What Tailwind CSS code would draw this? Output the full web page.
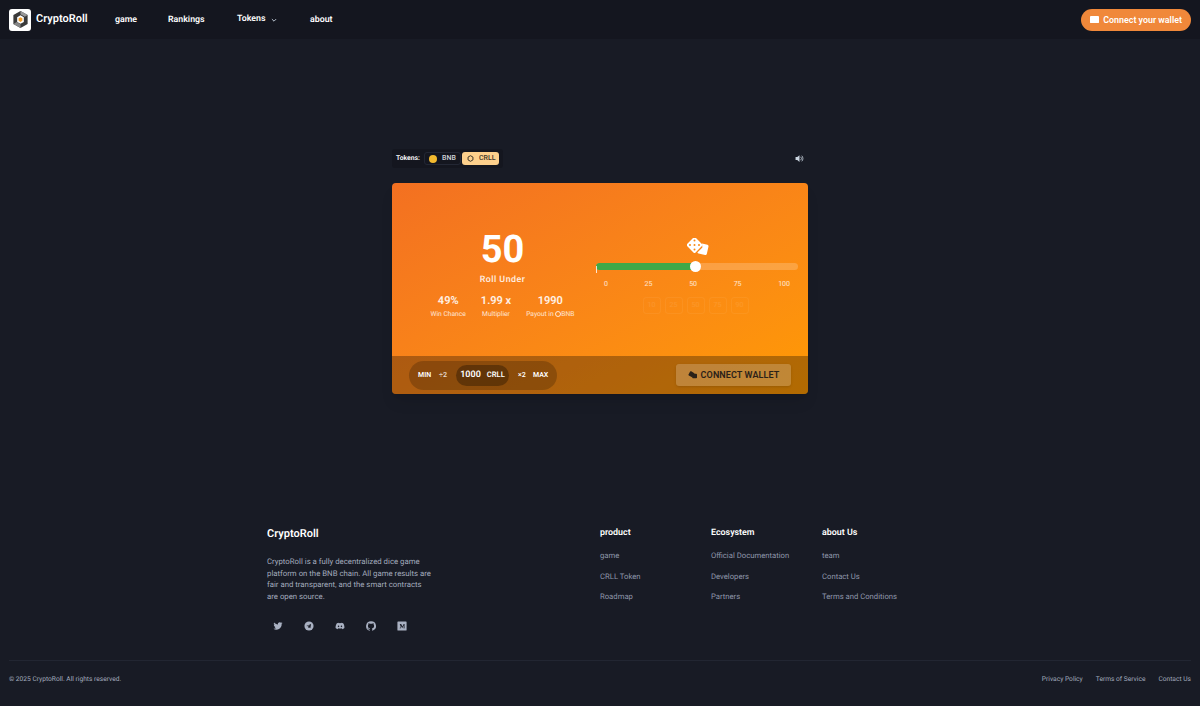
<!DOCTYPE html>
<html lang="en">
<head>
    <meta charset="UTF-8">
    <meta name="viewport" content="width=device-width, initial-scale=1.0">
    <title>CryptoRoll</title>
    <script src="https://cdn.jsdelivr.net/npm/@tailwindcss/browser@4"></script>
</head>
<body class="bg-[#181b25] text-white font-['Roboto',sans-serif] [text-rendering:geometricPrecision] h-[706px] overflow-hidden">
    <nav class="h-[39px] bg-[#14161f] flex items-center justify-between pl-[9px] pr-[9px]">
        <div class="flex items-center">
            <div class="flex items-center gap-[5px] w-[106px]">
                <div class="w-[22px] h-[22px] bg-white rounded-[3px] flex items-center justify-center">
                    <svg viewBox="0 0 20 20" class="w-[19px] h-[19px]">
                        <path d="M10 1l7.500 4.300v9.400L10 19l-7.500-4.300V5.300z" fill="#3a3a3a"/>
                        <path d="M10 1l7.500 4.300-3 1.700L10 4.500z" fill="#999"/>
                        <path d="M2.500 14.700L6 12.500l4 2.500v4z" fill="#888"/>
                        <path d="M10 5.500l3.500 2v5L10 14.500l-3.500-2v-5z" fill="#fff"/>
                        <path d="M10 7.500l2 1.200v2.600l-2 1.200-2-1.200V8.700z" fill="#f5a02c"/>
                    </svg>
                </div>
                <span class="text-[11px] font-semibold">CryptoRoll</span>
            </div>
            <div class="flex items-center text-[8.800px] font-semibold mt-[2px]">
                <a class="w-[53px]">game</a>
                <a class="w-[69px]">Rankings</a>
                <a class="w-[73px] flex items-center gap-[6px] -mt-[1px]">Tokens
                    <svg viewBox="0 0 10 10" class="w-[6px] h-[6px]" fill="none" stroke="#cbd5e1" stroke-width="1.500"><path d="M1.500 3.500L5 7l3.500-3.500"/></svg>
                </a>
                <a>about</a>
            </div>
        </div>
        <button class="h-[22px] w-[110px] rounded-full bg-[#f0883a] flex items-center justify-end pr-[9px] gap-[4px] text-[8.900px] font-semibold">
            <svg viewBox="0 0 10 10" class="w-[9px] h-[9px]" fill="#fff"><rect x="0" y="1" width="10" height="8" rx="1"/></svg>
            <span class="mt-[2px]">Connect your wallet</span>
        </button>
    </nav>

    <main class="w-[416px] ml-[392px] mt-[110px]">
        <div class="flex items-center justify-between h-[19px] pr-[4px]">
            <div class="flex items-center h-[19px] px-[4px] bg-[#14161f] rounded-[3px] gap-[3px]">
                <span class="text-[6.800px] font-semibold w-[25px] whitespace-nowrap">Tokens:</span>
                <div class="h-[13px] w-[37px] rounded-[3px] border border-[#232734] flex items-center pl-[4px] gap-[5px] text-[7px] font-medium text-[#d1d5db]">
                    <span class="w-[8px] h-[8px] rounded-full bg-[#f3ba2f]"></span>BNB
                </div>
                <div class="ml-[-2px] h-[13px] w-[37px] rounded-[3px] bg-[#fdd08c] flex items-center pl-[5px] gap-[5px] text-[7px] font-medium text-[#3a3327]">
                    <svg viewBox="0 0 10 10" class="w-[7px] h-[7px]" fill="none" stroke="#3a3327" stroke-width="1.400"><path d="M5 1l3.500 2v4L5 9 1.500 7V3z"/></svg>CRLL
                </div>
            </div>
            <svg viewBox="0 0 16 16" class="w-[9px] h-[9px]" fill="#cbd5e1"><path d="M1 5.500h3L8 2v12l-4-3.500H1z"/><path d="M10 5a4 4 0 010 6M12 3a7 7 0 010 10" fill="none" stroke="#cbd5e1" stroke-width="1.400"/></svg>
        </div>

        <div class="mt-[15px] h-[211px] rounded-[4px] overflow-hidden flex flex-col bg-gradient-to-br from-[#f37021] to-[#ff9a02] shadow-lg">
            <div class="h-[173px] flex">
                <div class="w-[204px] pl-[17px] flex flex-col items-center pt-[45px]">
                    <div class="text-[38px] leading-[44px] font-bold">50</div>
                    <div class="mt-[1px] text-[8.800px] leading-[14px] font-medium tracking-[0.5px] text-white/90">Roll Under</div>
                    <div class="mt-[7px] flex gap-[15px] whitespace-nowrap">
                        <div class="flex flex-col items-center">
                            <div class="text-[11px] leading-[14px] font-semibold text-white/90">49%</div>
                            <div class="text-[6.700px] leading-[12px] text-white/80">Win Chance</div>
                        </div>
                        <div class="flex flex-col items-center">
                            <div class="text-[11px] leading-[14px] font-semibold text-white/90">1.99 x</div>
                            <div class="text-[6.700px] leading-[12px] text-white/80">Multiplier</div>
                        </div>
                        <div class="flex flex-col items-center">
                            <div class="text-[11px] leading-[14px] font-semibold text-white/90">1990</div>
                            <div class="text-[6.700px] leading-[12px] text-white/80 flex items-center">Payout in&nbsp;<span class="w-[6px] h-[6px] rounded-full border border-white/80"></span>BNB</div>
                        </div>
                    </div>
                </div>
                <div class="w-[202px] flex flex-col items-stretch pt-[55px]">
                    <svg viewBox="0 0 22 18" class="w-[22px] h-[18px] self-center ml-[2px]">
                        <rect x="1.500" y="1" width="12" height="12" rx="1.500" fill="#fff" transform="rotate(45 7.500 7)"/>
                        <circle cx="7.500" cy="2.500" r="1" fill="#f98a14"/><circle cx="3" cy="7" r="1" fill="#f98a14"/><circle cx="12" cy="7" r="1" fill="#f98a14"/><circle cx="7.500" cy="11.500" r="1" fill="#f98a14"/><circle cx="7.500" cy="7" r="1" fill="#f98a14"/>
                        <path d="M15 5.500l5.500 1.300q1.300.400 1 1.700l-1.700 7.500q-.4 1.300-1.700 1l-6.500-1.500q-.8-.2-1.200-1l5-5z" fill="#fff"/>
                    </svg>
                    <div class="relative mt-[7px] h-[7px] rounded-full bg-white/20">
                        <div class="h-[7px] w-[99px] rounded-full bg-[#3ea848]"></div>
                        <div class="absolute left-[94px] top-[-2px] w-[11px] h-[11px] rounded-full bg-white"></div>
                        <div class="absolute left-0 top-[3px] w-px h-[7px] bg-white/80"></div>
                    </div>
                    <div class="mt-[8px] flex justify-between pl-[8px] pr-[8px] text-[7px] leading-[12px] text-white/80">
                        <span>0</span><span>25</span><span>50</span><span>75</span><span>100</span>
                    </div>
                    <div class="mt-[7px] flex justify-center gap-[4px] pr-[3px] text-[7px] text-white/10">
                        <span class="w-[18px] h-[17px] rounded-[3px] border border-white/5 flex items-center justify-center">10</span>
                        <span class="w-[18px] h-[17px] rounded-[3px] border border-white/5 flex items-center justify-center">25</span>
                        <span class="w-[18px] h-[17px] rounded-[3px] border border-white/5 flex items-center justify-center">50</span>
                        <span class="w-[18px] h-[17px] rounded-[3px] border border-white/5 flex items-center justify-center">75</span>
                        <span class="w-[18px] h-[17px] rounded-[3px] border border-white/5 flex items-center justify-center">90</span>
                    </div>
                </div>
            </div>
            <div class="h-[38px] bg-black/30 flex items-center justify-between pl-[17px] pr-[17px]">
                <div class="h-[29px] w-[148px] rounded-full bg-black/20 flex items-center text-[7px] font-semibold whitespace-nowrap">
                    <span class="ml-[9px] w-[20px]">MIN</span>
                    <span class="w-[10px] text-white/80 text-center">÷2</span>
                    <div class="ml-[8px] h-[21px] w-[53px] rounded-full bg-black/30 flex items-center justify-center gap-[6px]">
                        <span class="text-[9px] font-semibold mt-[1px]">1000</span><span class="text-[7.600px]">CRLL</span>
                    </div>
                    <span class="ml-[9px] w-[15px]">×2</span>
                    <span>MAX</span>
                </div>
                <button class="w-[115px] h-[22px] rounded-[3px] bg-white/20 flex items-center justify-center gap-[3px] text-[#2a2118] text-[9px] font-semibold tracking-[0.1px] shadow">
                    <svg viewBox="0 0 12 10" class="w-[10px] h-[8px]" fill="#2a2118"><rect x="1" y="1" width="6" height="6" rx="1" transform="rotate(30 4 4)"/><rect x="5" y="3.500" width="6" height="5.500" rx="1"/></svg>
                    <span class="mt-[1px]">CONNECT WALLET</span>
                </button>
            </div>
        </div>
    </main>

    <footer class="mt-[132px]">
        <div class="flex ml-[267px]">
            <div class="w-[333px]">
                <div class="text-[11px] leading-[16px] font-semibold">CryptoRoll</div>
                <p class="mt-[14px] w-[165px] text-[7.800px] leading-[11.700px] text-[#a3abbd]">CryptoRoll is a fully decentralized dice game platform on the BNB chain. All game results are fair and transparent, and the smart contracts are open source.</p>
                <div class="mt-[15px] flex gap-[15px] pl-[3px] text-[#a9b1c2]">
                    <svg viewBox="0 0 24 24" class="w-[16px] h-[16px] p-[3px]" fill="currentColor"><path d="M23 4.900c-.8.400-1.700.6-2.600.8.900-.6 1.600-1.400 2-2.500-.9.500-1.800.900-2.900 1.100A4.500 4.500 0 0011.800 8.400C8.100 8.200 4.800 6.400 2.600 3.700c-1.200 2.100-.6 4.700 1.400 6-.7 0-1.400-.2-2-.6 0 2.200 1.500 4.100 3.600 4.500-.7.200-1.400.2-2 .1.600 1.800 2.300 3.100 4.200 3.100A9 9 0 011 18.700 12.800 12.800 0 0020.800 7.300c.9-.6 1.600-1.400 2.200-2.400z"/></svg>
                    <svg viewBox="0 0 24 24" class="w-[16px] h-[16px] p-[3px]"><circle cx="12" cy="12" r="11" fill="currentColor"/><path d="M5.500 11.800l11.500-4.500-1.800 10-3.600-2.600-1.800 1.800-.3-3 5-4.600-6.300 3.900z" fill="#181b25"/></svg>
                    <svg viewBox="0 0 24 24" class="w-[16px] h-[16px] p-[3px]" fill="currentColor"><path d="M19.500 5.300A17 17 0 0015.300 4l-.6 1.100a16 16 0 00-5.400 0L8.700 4a17 17 0 00-4.200 1.300C1.800 9.300 1.100 13.200 1.400 17a17 17 0 005.200 2.600l1.100-1.800-1.700-.8.400-.3a12 12 0 0011.200 0l.4.300-1.700.8 1.100 1.800a17 17 0 005.200-2.600c.4-4.400-.7-8.200-3.100-11.700zM8.500 14.800c-1 0-1.900-1-1.900-2.100s.8-2.100 1.900-2.100 1.900 1 1.900 2.100-.8 2.100-1.900 2.100zm7 0c-1 0-1.900-1-1.900-2.100s.8-2.100 1.900-2.100 1.900 1 1.900 2.100-.8 2.100-1.900 2.100z"/></svg>
                    <svg viewBox="0 0 24 24" class="w-[16px] h-[16px] p-[3px]" fill="currentColor"><path d="M12 .5a11.700 11.700 0 00-3.700 22.800c.6.100.8-.3.8-.6v-2c-3.200.7-3.900-1.500-3.900-1.500-.5-1.400-1.300-1.700-1.300-1.700-1.100-.7.100-.7.100-.7 1.200.1 1.800 1.200 1.800 1.200 1 1.800 2.700 1.300 3.300 1 .1-.8.400-1.300.8-1.600-2.600-.3-5.300-1.300-5.300-5.700 0-1.300.5-2.300 1.200-3.100-.1-.3-.5-1.500.1-3.100 0 0 1-.3 3.200 1.200a11 11 0 015.800 0c2.200-1.500 3.200-1.200 3.200-1.200.6 1.600.2 2.800.1 3.100.7.800 1.200 1.800 1.200 3.100 0 4.500-2.700 5.400-5.300 5.700.4.400.8 1.100.8 2.200v3.200c0 .3.200.7.800.6A11.700 11.700 0 0012 .5z"/></svg>
                    <svg viewBox="0 0 24 24" class="w-[16px] h-[16px] p-[3px]"><rect x="1" y="1" width="22" height="22" rx="1.500" fill="currentColor"/><path d="M6 7l1.500 1.500v7L6 17.500h4L8.500 15.500V10l4 7.500L16 10v6l-1 1.500h4l-1-1.500V8l1-1h-3l-3 6-3-6z" fill="#181b25"/></svg>
                </div>
            </div>
            <div class="w-[111px]">
                <div class="text-[8.900px] leading-[14px] font-semibold">product</div>
                <div class="mt-[10px] flex flex-col gap-[8.500px] text-[7.700px] leading-[12px] text-[#8f97ab]">
                    <a>game</a><a>CRLL Token</a><a>Roadmap</a>
                </div>
            </div>
            <div class="w-[111px]">
                <div class="text-[8.900px] leading-[14px] font-semibold">Ecosystem</div>
                <div class="mt-[10px] flex flex-col gap-[8.500px] text-[7.700px] leading-[12px] text-[#8f97ab]">
                    <a>Official Documentation</a><a>Developers</a><a>Partners</a>
                </div>
            </div>
            <div>
                <div class="text-[8.900px] leading-[14px] font-semibold">about Us</div>
                <div class="mt-[10px] flex flex-col gap-[8.500px] text-[7.700px] leading-[12px] text-[#8f97ab]">
                    <a>team</a><a>Contact Us</a><a>Terms and Conditions</a>
                </div>
            </div>
        </div>
        <div class="mt-[26px] mx-[9px] border-t border-[#222632] flex items-center justify-between pt-[13px] text-[6.650px] leading-[11px] text-[#a3abbd]">
            <span>© 2025 CryptoRoll. All rights reserved.</span>
            <div class="flex gap-[13px]">
                <a>Privacy Policy</a><a>Terms of Service</a><a>Contact Us</a>
            </div>
        </div>
    </footer>
</body>
</html>
